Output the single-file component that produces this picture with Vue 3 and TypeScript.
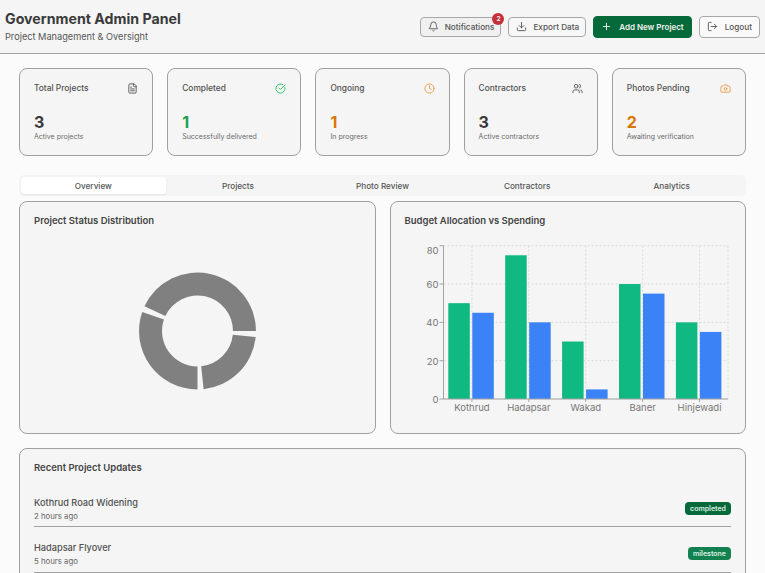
<script setup lang="ts">
const stats = [
  { label: 'Total Projects', value: 3, note: 'Active projects', tone: 'dark', icon: 'file' },
  { label: 'Completed', value: 1, note: 'Successfully delivered', tone: 'green', icon: 'check' },
  { label: 'Ongoing', value: 1, note: 'In progress', tone: 'orange', icon: 'clock' },
  { label: 'Contractors', value: 3, note: 'Active contractors', tone: 'dark', icon: 'users' },
  { label: 'Photos Pending', value: 2, note: 'Awaiting verification', tone: 'orange', icon: 'camera' },
]
const tabs = ['Overview', 'Projects', 'Photo Review', 'Contractors', 'Analytics']
const updates = [
  { name: 'Kothrud Road Widening', time: '2 hours ago', tag: 'completed', cls: 'done' },
  { name: 'Hadapsar Flyover', time: '5 hours ago', tag: 'milestone', cls: 'mile' },
]

const cx = 163.5
const cy = 94
function pt(r: number, a: number): string {
  const t = (a * Math.PI) / 180
  return `${(cx + r * Math.cos(t)).toFixed(2)} ${(cy - r * Math.sin(t)).toFixed(2)}`
}
function seg(a0: number, a1: number): string {
  const R = 58.5
  const r = 35.5
  const large = a1 - a0 > 180 ? 1 : 0
  return `M${pt(R, a0)}A${R} ${R} 0 ${large} 0 ${pt(R, a1)}L${pt(r, a1)}A${r} ${r} 0 ${large} 1 ${pt(r, a0)}Z`
}
const segments = [seg(0, 155), seg(161, 270), seg(276, 354)]

const left = 38.5
const right = 323
const base = 162
const top = 8.7
const unit = (base - top) / 80
const cats = [
  { n: 'Kothrud', a: 50, b: 45 },
  { n: 'Hadapsar', a: 75, b: 40 },
  { n: 'Wakad', a: 30, b: 5 },
  { n: 'Baner', a: 60, b: 55 },
  { n: 'Hinjewadi', a: 40, b: 35 },
]
const step = (right - left) / 5
const vTicks = cats.map((_, i) => left + step * (i + 0.5))
const hTicks = [0, 20, 40, 60, 80]
</script>

<template>
  <div class="page">
    <header class="top">
      <div>
        <h1>Government Admin Panel</h1>
        <p>Project Management &amp; Oversight</p>
      </div>
      <div class="actions">
        <button class="btn small notif">
          <svg class="ic" viewBox="0 0 24 24"><path d="M10.3 21a2 2 0 0 0 3.4 0" /><path d="M3.3 15.3A1 1 0 0 0 4 17h16a1 1 0 0 0 .7-1.7C19.4 14 18 12.5 18 8A6 6 0 0 0 6 8c0 4.500-1.400 6-2.700 7.300" /></svg>
          Notifications
          <span class="badge">2</span>
        </button>
        <button class="btn small">
          <svg class="ic" viewBox="0 0 24 24"><path d="M12 15V3" /><path d="M21 15v4a2 2 0 0 1-2 2H5a2 2 0 0 1-2-2v-4" /><path d="m7 10 5 5 5-5" /></svg>
          Export Data
        </button>
        <button class="btn primary">
          <svg class="ic" viewBox="0 0 24 24"><path d="M5 12h14" /><path d="M12 5v14" /></svg>
          Add New Project
        </button>
        <button class="btn">
          <svg class="ic" viewBox="0 0 24 24"><path d="M9 21H5a2 2 0 0 1-2-2V5a2 2 0 0 1 2-2h4" /><path d="m16 17 5-5-5-5" /><path d="M21 12H9" /></svg>
          Logout
        </button>
      </div>
    </header>

    <main class="main">
      <section class="stats">
        <article v-for="s in stats" :key="s.label" class="card stat">
          <div class="stat-head">
            <span>{{ s.label }}</span>
            <svg class="ic" :class="'c-' + s.tone" viewBox="0 0 24 24">
              <template v-if="s.icon === 'file'">
                <path d="M15 2H6a2 2 0 0 0-2 2v16a2 2 0 0 0 2 2h12a2 2 0 0 0 2-2V7Z" /><path d="M14 2v4a2 2 0 0 0 2 2h4" /><path d="M16 13H8" /><path d="M16 17H8" /><path d="M10 9H8" />
              </template>
              <template v-else-if="s.icon === 'check'">
                <path d="M21.800 10A10 10 0 1 1 17 3.340" /><path d="m9 11 3 3L22 4" />
              </template>
              <template v-else-if="s.icon === 'clock'">
                <circle cx="12" cy="12" r="10" /><path d="M12 6v6l4 2" />
              </template>
              <template v-else-if="s.icon === 'users'">
                <path d="M16 21v-2a4 4 0 0 0-4-4H6a4 4 0 0 0-4 4v2" /><circle cx="9" cy="7" r="4" /><path d="M22 21v-2a4 4 0 0 0-3-3.870" /><path d="M16 3.130a4 4 0 0 1 0 7.750" />
              </template>
              <template v-else>
                <path d="M14.500 4h-5L7 7H4a2 2 0 0 0-2 2v9a2 2 0 0 0 2 2h16a2 2 0 0 0 2-2V9a2 2 0 0 0-2-2h-3z" /><circle cx="12" cy="13" r="3" />
              </template>
            </svg>
          </div>
          <div class="stat-value" :class="'c-' + s.tone">{{ s.value }}</div>
          <div class="stat-note">{{ s.note }}</div>
        </article>
      </section>

      <nav class="tabs">
        <div v-for="(t, i) in tabs" :key="t" class="tab" :class="{ active: i === 0 }">{{ t }}</div>
      </nav>

      <section class="charts">
        <article class="card chart">
          <h2>Project Status Distribution</h2>
          <svg class="plot" viewBox="0 0 326 190">
            <path v-for="(d, i) in segments" :key="i" :d="d" fill="#808080" />
          </svg>
        </article>
        <article class="card chart">
          <h2>Budget Allocation vs Spending</h2>
          <svg class="plot" viewBox="0 0 326 190">
            <g class="grid">
              <line v-for="t in hTicks" :key="'h' + t" :x1="left" :x2="right" :y1="base - t * unit" :y2="base - t * unit" />
              <line v-for="x in vTicks" :key="'v' + x" :x1="x" :x2="x" :y1="top" :y2="base" />
              <line :x1="right" :x2="right" :y1="top" :y2="base" />
            </g>
            <g v-for="(c, i) in cats" :key="c.n">
              <rect :x="left + step * i + 4.800" :y="base - c.a * unit" width="21.500" :height="c.a * unit" fill="#10b981" />
              <rect :x="left + step * i + 28.800" :y="base - c.b * unit" width="21.500" :height="c.b * unit" fill="#3b82f6" />
              <text class="tick" :x="vTicks[i]" y="174" text-anchor="middle">{{ c.n }}</text>
              <line class="axis" :x1="vTicks[i]" :x2="vTicks[i]" :y1="base" :y2="base + 3" />
            </g>
            <line class="axis" :x1="left" :x2="left" :y1="top" :y2="base" />
            <line class="axis" :x1="left" :x2="right" :y1="base" :y2="base" />
            <g v-for="t in hTicks" :key="'l' + t">
              <line class="axis" :x1="left - 4" :x2="left" :y1="base - t * unit" :y2="base - t * unit" />
              <text class="tick" :x="left - 5" :y="t === 80 ? 17 : base - t * unit + 4" text-anchor="end">{{ t }}</text>
            </g>
          </svg>
        </article>
      </section>

      <section class="card recent">
        <h2>Recent Project Updates</h2>
        <div v-for="u in updates" :key="u.name" class="row">
          <div>
            <div class="row-name">{{ u.name }}</div>
            <div class="row-time">{{ u.time }}</div>
          </div>
          <span class="tag" :class="u.cls">{{ u.tag }}</span>
        </div>
      </section>
    </main>
  </div>
</template>

<style>
html, body { margin: 0; background: #fbfbfb; overflow: hidden; }
</style>

<style scoped>
.page { height: 573px; overflow: hidden; font-family: Inter, "Liberation Sans", sans-serif; color: #3a3a3a; background: #fbfbfb; }
.top { height: 54px; box-sizing: border-box; display: flex; justify-content: space-between; align-items: center; padding: 0 5px; background: #f5f5f5; border-bottom: 1px solid #a3a3a3; }
h1 { margin: 0; font-size: 14.200px; font-weight: 700; line-height: 20px; color: #3a3a3a; }
.top p { margin: 1px 0 0; font-size: 9.200px; line-height: 14px; color: #555; }
.actions { display: flex; align-items: center; gap: 7px; }
.btn { position: relative; display: flex; align-items: center; gap: 7px; height: 22px; padding: 0 7px; border: 1px solid #a8a8a8; border-radius: 4px; background: #fafafa; font: 500 8.200px Inter, sans-serif; color: #555; }
.btn.small { height: 20px; background: #f7f7f7; gap: 6px; padding-right: 6px; }
.btn.notif { background: #f0f0f0; }
.btn.primary { background: #06693a; border-color: #06693a; color: #f2f2f2; font-weight: 600; font-size: 8px; }
.badge { position: absolute; top: -5px; right: -4px; width: 12px; height: 12px; border-radius: 50%; background: #c5303a; color: #fff; font-size: 6.500px; font-weight: 600; display: flex; align-items: center; justify-content: center; }
.ic { width: 11px; height: 11px; flex: none; fill: none; stroke: currentColor; stroke-width: 2; stroke-linecap: round; stroke-linejoin: round; }
.main { padding: 14px 19px 0; }
.stats { display: grid; grid-template-columns: repeat(5, 1fr); gap: 14px; }
.card { background: #f5f5f5; border: 1px solid #a0a0a0; border-radius: 8px; box-sizing: border-box; }
.stat { height: 88px; padding: 13.500px 14px 14px; }
.stat-head { display: flex; justify-content: space-between; align-items: center; height: 11px; font-size: 8.400px; font-weight: 500; color: #505050; }
.stat-value { margin-top: 19px; font-size: 16px; font-weight: 700; line-height: 18px; }
.stat-note { margin-top: 1px; font-size: 7px; line-height: 10px; color: #6a6a6a; }
.c-dark { color: #3a3a3a; }
.stat-head .c-dark { color: #555; }
.c-green { color: #16a34a; }
.stat-head .c-green { color: #22c55e; }
.c-orange { color: #d97706; }
.stat-head .c-orange { color: #ea9a4a; }
.tabs { margin-top: 19px; height: 21px; display: grid; grid-template-columns: repeat(5, 1fr); padding: 2px; box-sizing: border-box; background: #f5f5f5; border-radius: 5px; }
.tab { display: flex; align-items: center; justify-content: center; font-size: 8.200px; font-weight: 500; color: #555; border-radius: 3px; }
.tab.active { background: #fff; box-shadow: 0 1px 2px rgba(0, 0, 0, .08); }
.charts { margin-top: 5px; display: grid; grid-template-columns: 1fr 1fr; gap: 14px; }
.chart { height: 233px; padding: 13px 14px 14px; }
h2 { margin: 0; font-size: 9.500px; font-weight: 600; line-height: 11px; color: #444; }
.plot { display: block; width: 326px; height: 190px; margin-top: 11px; }
.grid line { stroke: #d4d4d4; stroke-width: .8; stroke-dasharray: 2 2; }
.axis { stroke: #a3a3a3; stroke-width: 1; }
.tick { font-family: Inter, sans-serif; font-size: 9.500px; fill: #777; }
.recent { margin-top: 14px; padding: 13px 14px 14px; height: 200px; }
.recent h2 { margin-bottom: 8.500px; }
.row { display: flex; justify-content: space-between; align-items: center; padding: 14px 0 5.500px; border-bottom: 1px solid #a3a3a3; }
.row-name { font-size: 9.200px; font-weight: 500; line-height: 13px; color: #505050; }
.row-time { margin-top: 2px; font-size: 7.800px; line-height: 10px; color: #666; }
.tag { display: flex; align-items: center; height: 13px; padding: 0 5px; border-radius: 4px; font-size: 7px; font-weight: 600; color: #d9f0e3; }
.done { background: #06693a; }
.mile { background: #13804f; }
</style>
